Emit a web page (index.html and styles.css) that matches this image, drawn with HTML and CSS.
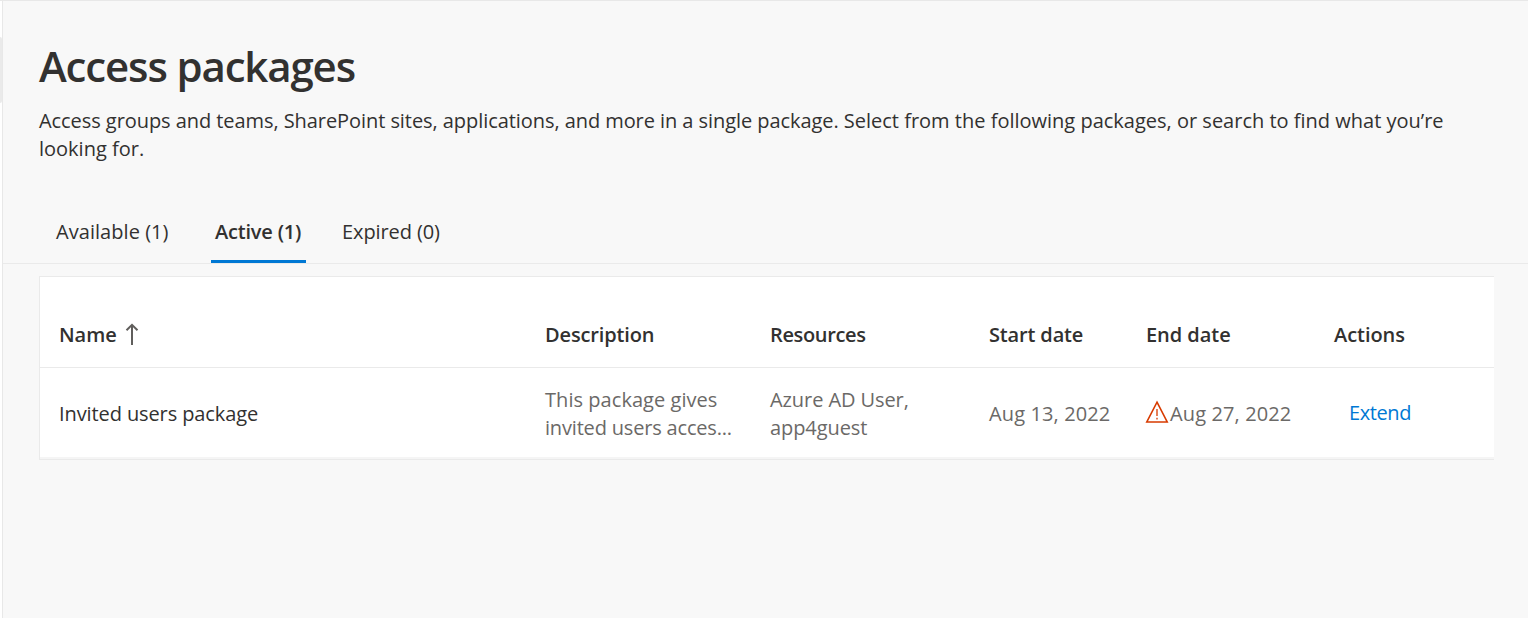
FILE: index.html
```html
<!DOCTYPE html>
<html lang="en">
<head>
<meta charset="utf-8">
<title>Access packages</title>
<link rel="stylesheet" href="styles.css">
</head>
<body>
<div class="app">
  <aside class="rail"><div class="rail-thumb"></div></aside>
  <main class="page">
    <header class="intro">
      <h1 class="title">Access packages</h1>
      <p class="summary"><span class="lead">Access groups and teams, SharePoint sites, applications, and more in a single package.</span> Select from the following packages, or search to find what you’re<br>looking for.</p>
    </header>
    <nav class="tabs">
      <a class="tab tab-available">Available (1)</a>
      <a class="tab tab-active">Active (1)</a>
      <a class="tab tab-expired">Expired (0)</a>
    </nav>
    <section class="card">
      <div class="row head">
        <div class="cell name"><span>Name</span><svg class="sort" width="14" height="22" viewBox="0 0 14 22"><path d="M7 22V2M1.500 7.200 7 1.800l5.500 5.400" fill="none" stroke="#605e5c" stroke-width="2"/></svg></div>
        <div class="cell h-desc">Description</div>
        <div class="cell h-res">Resources</div>
        <div class="cell h-start">Start date</div>
        <div class="cell">End date</div>
        <div class="cell">Actions</div>
      </div>
      <div class="row item">
        <div class="cell package">Invited users package</div>
        <div class="cell muted"><span class="d1">This package gives</span><br><span class="d2">invited users acces...</span></div>
        <div class="cell muted resources">Azure AD User,<br>app4guest</div>
        <div class="cell muted date">Aug 13, 2022</div>
        <div class="cell muted date end"><svg class="warn" width="24" height="24" viewBox="0 0 24 24"><path d="M12 2.200 22.200 22H1.800Z" fill="none" stroke="#d83b01" stroke-width="1.600"/><path d="M12 9v7M12 17.800v1.700" fill="none" stroke="#d83b01" stroke-width="1.300"/></svg><span>Aug 27, 2022</span></div>
        <div class="cell"><a class="extend">Extend</a></div>
      </div>
    </section>
  </main>
</div>
</body>
</html>
```
FILE: styles.css
```css
* { box-sizing: border-box; }
body { margin: 0; font-family: "Open Sans", "Noto Sans", sans-serif; font-size: 20px; line-height: 28px; color: #323130; background: #f8f8f8; white-space: nowrap; }
.app { display: flex; height: 618px; border-top: 1px solid #e8e8e8; overflow: hidden; }
.rail { width: 3px; padding-top: 36px; background: #fff; border-right: 1px solid #e8e8e8; flex: none; }
.rail-thumb { height: 66px; background: #eaeaea; border-radius: 0 2px 2px 0; }
.page { flex: 1; min-width: 0; background: #f8f8f8; }
.intro { padding: 36px 36px 0; height: 200px; }
.title { margin: 0; font-size: 42px; line-height: 58px; font-weight: 540; letter-spacing: -1.15px; }
.summary { margin: 12px 0 0; letter-spacing: 0; }
.lead { letter-spacing: -0.065px; }
.tabs { display: flex; height: 63px; padding-left: 36px; border-bottom: 1px solid #eaeaea; }
.tab { padding: 17px 4px 0; height: 62px; flex: none; }
.tab-available { width: 172px; padding-left: 17px; letter-spacing: 0.05px; }
.tab-active { width: 95px; font-weight: 600; letter-spacing: -0.2px; border-bottom: 3px solid #0078d4; }
.tab-expired { margin-left: 32px; letter-spacing: -0.1px; }
.card { margin: 12px 34px 0 36px; height: 184px; background: #fff; border: 1px solid #eaeaea; border-right: 0; }
.row { display: grid; grid-template-columns: 486px 225px 219px 157px 188px 1fr; padding-left: 19px; align-items: center; }
.head { height: 91px; padding-top: 25px; font-weight: 540; letter-spacing: -0.05px; border-bottom: 1px solid #eaeaea; }
.h-desc { letter-spacing: -0.15px; }
.h-res { letter-spacing: -0.35px; }
.h-start { letter-spacing: -0.15px; }
.item { height: 91px; padding-top: 2px; border-bottom: 2px solid #f5f5f5; }
.name { display: flex; align-items: center; }
.sort { margin: -2px 0 0 8px; }
.package { letter-spacing: -0.1px; }
.muted { color: #6b6967; }
.d1 { letter-spacing: 0.05px; }
.d2 { letter-spacing: -0.18px; }
.resources { letter-spacing: -0.08px; }
.date { letter-spacing: 0.12px; }
.end { display: flex; align-items: center; }
.warn { margin: -3px 1px 0 -1px; flex: none; }
.extend { display: block; color: #0078d4; margin: -2px 0 0 15px; letter-spacing: -0.4px; }
```
